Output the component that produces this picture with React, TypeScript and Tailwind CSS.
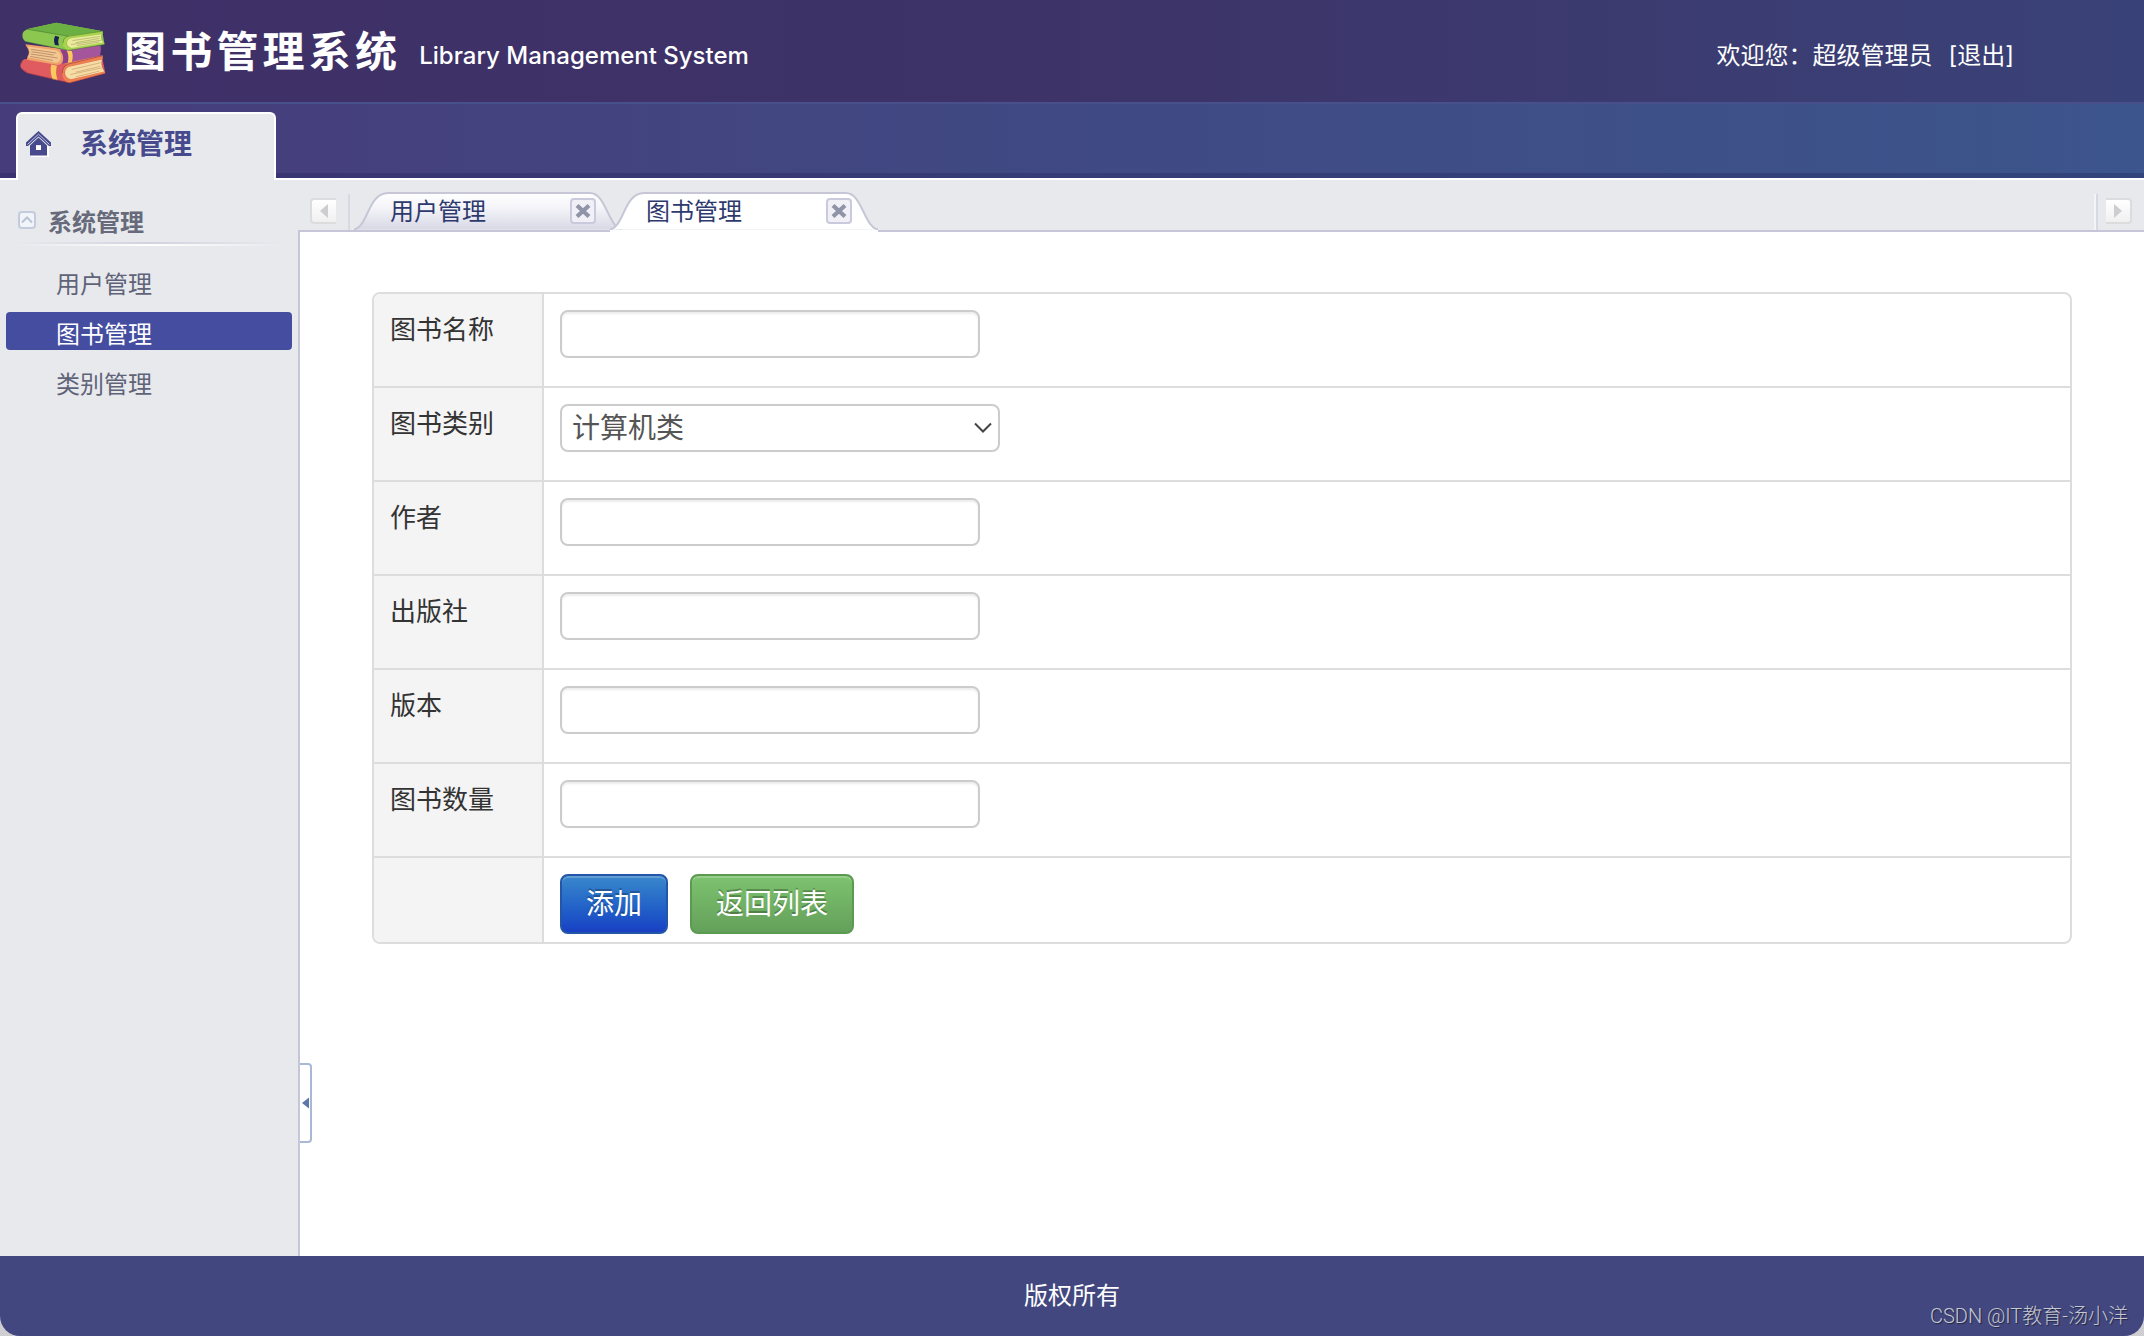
import React, { useState } from "react";

function BooksLogo() {
  return (
    <svg viewBox="60 70 256 184" className="mt-1 h-[62px] w-[86px] shrink-0" aria-hidden="true">
      {/* red book */}
      <path d="M74 180 L200 196 L306 170 L306 182 L314 222 L207 251 L82 222 Q60 212 61 198 Q63 184 74 180Z" fill="#df5b5f" />
      <path d="M172 190 L306 169 L306 180 L206 202 Q192 208 192 224 Q194 238 212 241 L313 217 L313 223 L207 251 Q186 246 186 222 Q186 204 200 198Z" fill="#ee8350" />
      <path d="M206 203 L304 181 Q298 198 311 217 L212 240 Q194 236 194 222 Q194 207 206 203Z" fill="#f5dda3" />
      <path d="M153 196 L170 200 Q164 220 172 243 L157 240 Q148 218 153 196Z" fill="#f8c95c" />
      <path d="M214 211 L300 191 M226 219 L298 202 M210 226 L304 206 M226 233 L296 216" stroke="#b98a5c" strokeWidth="1.5" fill="none" />
      <path d="M62 196 L68 182 M64 208 L84 222 L207 251 L313 223 M306 170 L200 196 Q186 204 186 222" stroke="#8c2a3c" strokeWidth="1.5" fill="none" />
      {/* purple book */}
      <path d="M176 150 L300 140 Q303 154 298 170 L198 192 L168 196Z" fill="#a4559c" />
      <path d="M76 136 L172 148 Q190 154 190 174 Q190 196 172 198 L80 182 L82 174 Q92 158 80 144Z" fill="#f0a06a" />
      <path d="M83 143 L166 154 Q182 158 182 174 Q182 190 166 191 L84 175 Q94 158 83 143Z" fill="#f2c890" />
      <path d="M92 151 L168 162 M94 158 L160 168 M92 165 L172 177 M90 172 L158 184" stroke="#8e5b50" strokeWidth="1.5" fill="none" />
      <path d="M190 152 L200 155 Q206 172 202 191 L186 194 Q194 174 180 154Z" fill="#8d3f87" />
      <path d="M199 154 L214 156 Q220 172 214 189 L202 191 Q208 172 199 154Z" fill="#f8c95c" />
      {/* green book */}
      <path d="M92 88 L168 72 L306 97 L306 104 L311 134 L200 154 L76 128 Q64 116 68 103 Q72 92 92 88Z" fill="#8cc850" />
      <path d="M80 91 L168 72 L306 97 L204 112Z" fill="#6cb043" />
      <path d="M204 111 L306 97 L306 105 L212 118 Q198 122 198 134 Q198 146 212 147 L311 131 L311 137 L204 154 Q188 148 188 133 Q190 115 204 111Z" fill="#a9d44d" />
      <path d="M212 118 L303 106 Q296 118 308 131 L214 147 Q200 144 200 133 Q200 121 212 118Z" fill="#ece99a" />
      <path d="M216 125 L298 113 M226 131 L296 119 M212 137 L302 124 M230 140 L296 129" stroke="#8a9350" strokeWidth="1.5" fill="none" />
      <path d="M165 111 L177 114 Q171 126 176 140 L164 138 Q158 124 165 111Z" fill="#172250" />
      <path d="M80 91 L204 112 L306 97 M76 128 L204 154 L311 137 M204 112 Q188 116 188 133" stroke="#3f7030" strokeWidth="1.5" fill="none" />
    </svg>
  );
}

function HomeIcon() {
  return (
    <svg viewBox="0 0 26 26" className="h-[26px] w-[26px] shrink-0" aria-hidden="true">
      <path d="M5 15 H23 V26 H5Z" fill="#fff" />
      <path d="M12.5 0 L0 11.5 V15 L2 15 L12.5 5.5 L23 15 L25 15 V11.5Z" fill="#474a8c" />
      <path d="M12.5 3.2 L1.5 13.5 M12.5 3.2 L23.5 13.5" stroke="#c3c5dc" strokeWidth="1" />
      <path fillRule="evenodd" d="M12.5 6.5 L4 14.5 V24.5 H21 V14.5Z M10 14 H15 V19 H10Z" fill="#474a8c" />
    </svg>
  );
}

function TabShape({ active }: { active: boolean }) {
  return (
    <svg viewBox="0 0 268 38" preserveAspectRatio="none" className="absolute inset-0 h-[38px] w-full" aria-hidden="true">
      <defs>
        <linearGradient id="tab-idle" x1="0" y1="0" x2="0" y2="1">
          <stop offset="0" stopColor="#ffffff" />
          <stop offset="0.35" stopColor="#f6f6fa" />
          <stop offset="1" stopColor="#d9d9e6" />
        </linearGradient>
      </defs>
      <path
        d="M0 37.5 C14 35 14 1 34 1 H236 C252 1 254 35 268 37.5"
        fill={active ? "#ffffff" : "url(#tab-idle)"}
        stroke="#c6c6d6"
        strokeWidth="2"
      />
    </svg>
  );
}

function DocTab({ label, active, onSelect }: { label: string; active: boolean; onSelect: () => void }) {
  return (
    <div
      className={
        active
          ? "relative z-10 -mr-3 h-[38px] w-[268px] shadow-[0_2px_0_#ffffff]"
          : "relative -mr-3 h-[38px] w-[268px]"
      }
    >
      <TabShape active={active} />
      <div className="relative flex h-full items-center justify-between pr-[26px] pl-9">
        <button
          type="button"
          role="tab"
          aria-selected={active}
          onClick={onSelect}
          className="pt-[2px] text-2xl text-[#2e3a6e]"
        >
          {label}
        </button>
        <button
          type="button"
          aria-label={"关闭" + label}
          className="flex h-[26px] w-[26px] items-center justify-center rounded-sm border-2 border-[#c9cadb] bg-[#f0f0f6]"
        >
          <svg viewBox="0 0 16 16" className="h-4 w-4" aria-hidden="true">
            <path d="M2 2.5 L14 13.5 M14 2.5 L2 13.5" stroke="#9094a8" strokeWidth="4.2" />
          </svg>
        </button>
      </div>
    </div>
  );
}

function Arrow({ dir }: { dir: "left" | "right" }) {
  return (
    <button
      type="button"
      aria-label={dir === "left" ? "向左滚动" : "向右滚动"}
      className={
        dir === "left"
          ? "flex h-[26px] w-[26px] items-center justify-center rounded-l-sm border-2 border-r-0 border-[#dcdcdf] bg-linear-to-b from-white to-[#f0f0f0]"
          : "flex h-[26px] w-[26px] items-center justify-center rounded-r-sm border-2 border-l-0 border-[#dcdcdf] bg-linear-to-b from-white to-[#f0f0f0]"
      }
    >
      <svg viewBox="0 0 10 16" className="h-4 w-[10px]" aria-hidden="true">
        <path d={dir === "left" ? "M9 1 V15 L1 8Z" : "M1 1 V15 L9 8Z"} fill="#cdcdcf" />
      </svg>
    </button>
  );
}

const labelCell =
  "w-[170px] border-r-2 border-[#dddddd] bg-[#f4f4f4] px-4 pt-4 text-left align-top text-[26px] leading-10 font-normal text-[#333333]";

function Row({ label, id, children }: { label: string; id: string; children: React.ReactNode }) {
  return (
    <tr className="h-[94px]">
      <th scope="row" className={labelCell + " border-b-2"}>
        <label htmlFor={id}>{label}</label>
      </th>
      <td className="border-b-2 border-[#dddddd] px-4 pt-4 align-top">{children}</td>
    </tr>
  );
}

function TextRow({ label, id }: { label: string; id: string }) {
  return (
    <Row label={label} id={id}>
      <input
        id={id}
        type="text"
        className="block h-12 w-[420px] rounded-lg border-2 border-[#cccccc] bg-white px-3 text-[28px] text-[#555555] shadow-[inset_0_2px_2px_rgba(0,0,0,0.075)]"
      />
    </Row>
  );
}

const menu = ["用户管理", "图书管理", "类别管理"];

export default function App() {
  const [current, setCurrent] = useState("图书管理");
  return (
    <div
      lang="zh-CN"
      className="flex min-h-screen flex-col bg-[#cfcfd3] font-['Inter','Noto_Sans_CJK_SC',sans-serif]"
    >
      <header className="flex h-[102px] items-center bg-linear-to-r from-[#3f3068] via-[#3d3368] to-[#394278] pr-[130px] pl-5 text-white">
        <BooksLogo />
        <h1 className="ml-[18px] pb-1 font-['Noto_Sans_CJK_SC',sans-serif] text-[42px] leading-[96px] font-bold tracking-widest">
          图书管理系统
        </h1>
        <span className="ml-[18px] pt-[10px] text-2xl font-medium">Library Management System</span>
        <div className="ml-auto flex gap-4 pt-[10px] text-2xl">
          <span>欢迎您：超级管理员</span>
          <a href="#logout">[退出]</a>
        </div>
      </header>

      <nav className="flex h-[76px] items-end border-t-2 border-[#47508a] bg-linear-to-r from-[#473c7b] via-[#404882] via-45% to-[#3c558c] pl-4 shadow-[inset_0_-5px_0_rgba(30,30,90,0.3)]">
        <a
          href="#system"
          className="z-10 -mb-[2px] flex h-[68px] w-[260px] items-center gap-7 rounded-t-md border-2 border-b-0 border-white bg-[#e8e9ed] pb-[6px] pl-2 text-[28px] font-bold text-[#474a8c]"
        >
          <HomeIcon />
          <span>系统管理</span>
        </a>
      </nav>

      <div className="flex grow border-t-2 border-white bg-[#e8e9ed]">
        <aside className="w-[298px] shrink-0">
          <h2 className="mt-6 flex h-9 items-center gap-3 pl-[18px] text-2xl font-bold text-[#666a7a]">
            <button
              type="button"
              aria-label="折叠"
              className="mb-1 h-[18px] w-[18px] rounded-sm border-2 border-[#c3cbdc] bg-[#f1f5fa]"
            >
              <svg viewBox="0 0 14 14" className="h-[14px] w-[14px]" aria-hidden="true">
                <path d="M2 9.5 L7 4.5 L12 9.5" stroke="#b9c3d6" strokeWidth="2" fill="none" />
              </svg>
            </button>
            <span className="pt-[2px]">系统管理</span>
          </h2>
          <div className="mx-4 mt-[2px] h-[2px] bg-linear-to-r from-transparent via-[#d3d3df] to-transparent" />
          <div className="mx-4 h-[2px] bg-linear-to-r from-transparent via-white to-transparent" />
          <ul className="mt-4 space-y-3 px-[6px]">
            {menu.map((m) => (
              <li key={m}>
                <a
                  href="#menu"
                  onClick={() => setCurrent(m)}
                  className={
                    m === current
                      ? "flex h-[38px] items-center rounded-sm bg-[#444da0] pt-2 pl-[50px] text-2xl text-white"
                      : "flex h-[38px] items-center rounded-sm pt-2 pl-[50px] text-2xl text-[#5f6378]"
                  }
                >
                  {m}
                </a>
              </li>
            ))}
          </ul>
        </aside>

        <div className="flex grow flex-col">
          <div className="flex h-[50px] items-end">
            <div className="flex h-[38px] items-center pl-3">
              <Arrow dir="left" />
            </div>
            <div className="mr-1 ml-3 h-9 border-r-2 border-[#d8d8e2] bg-white" />
            <div role="tablist" className="flex">
              <DocTab label="用户管理" active={current === "用户管理"} onSelect={() => setCurrent("用户管理")} />
              <DocTab label="图书管理" active={current !== "用户管理"} onSelect={() => setCurrent("图书管理")} />
            </div>
            <div className="ml-auto h-9 w-1 border-r-2 border-l-2 border-r-[#d8d8e2] border-l-[#f4f4f7]" />
            <div className="flex h-[38px] items-center pr-3 pl-2">
              <Arrow dir="right" />
            </div>
          </div>
          <main className="relative grow border-t-2 border-l-2 border-[#c6c6d8] bg-white px-[72px] pt-[60px] pb-[60px]">
            <div className="overflow-hidden rounded-lg border-2 border-[#dddddd]">
              <table className="w-full border-separate border-spacing-0">
                <tbody>
                  <TextRow label="图书名称" id="name" />
                  <Row label="图书类别" id="category">
                    <div className="relative w-[440px]">
                      <select
                        id="category"
                        className="block h-12 w-full appearance-none rounded-lg border-2 border-[#cccccc] bg-white pl-[10px] text-[28px] leading-10 text-[#555555]"
                      >
                        <option>计算机类</option>
                      </select>
                      <svg
                        viewBox="0 0 18 12"
                        className="pointer-events-none absolute top-[18px] right-2 h-3 w-[18px]"
                        aria-hidden="true"
                      >
                        <path d="M1 1.5 L9 9.5 L17 1.5" stroke="#444444" strokeWidth="2" fill="none" />
                      </svg>
                    </div>
                  </Row>
                  <TextRow label="作者" id="author" />
                  <TextRow label="出版社" id="publisher" />
                  <TextRow label="版本" id="edition" />
                  <TextRow label="图书数量" id="quantity" />
                  <tr>
                    <th className={labelCell} />
                    <td className="px-4 pt-4 pb-2">
                      <div className="flex gap-[22px]">
                        <button
                          type="button"
                          className="h-[60px] rounded-lg border-2 border-[#2355a8] bg-linear-to-b from-[#3a87cb] to-[#1a3fc4] px-6 text-[28px] text-white shadow-[inset_0_2px_0_rgba(255,255,255,0.2)] text-shadow-[0_-2px_0_rgba(0,0,0,0.25)]"
                        >
                          添加
                        </button>
                        <button
                          type="button"
                          className="h-[60px] rounded-lg border-2 border-[#5c9a52] bg-linear-to-b from-[#7dc36f] to-[#64a05a] px-6 text-[28px] text-white shadow-[inset_0_2px_0_rgba(255,255,255,0.2)] text-shadow-[0_-2px_0_rgba(0,0,0,0.25)]"
                        >
                          返回列表
                        </button>
                      </div>
                    </td>
                  </tr>
                </tbody>
              </table>
            </div>
            <button
              type="button"
              aria-label="收起侧栏"
              className="absolute bottom-[113px] left-0 flex h-20 w-3 items-center justify-center rounded-r-sm border-2 border-l-0 border-[#aab8d8] bg-white"
            >
              <svg viewBox="0 0 8 12" className="h-3 w-2" aria-hidden="true">
                <path d="M8 0.5 V11.5 L1 6Z" fill="#5f76a8" />
              </svg>
            </button>
          </main>
        </div>
      </div>

      <footer className="relative flex h-20 items-center justify-center rounded-b-[20px] bg-[#42487f] text-2xl text-white">
        <span>版权所有</span>
        <span className="absolute right-4 bottom-[6px] font-['Roboto','Noto_Sans_CJK_SC',sans-serif] text-xl font-light text-[#c5c7d3] text-shadow-[1px_1px_1px_rgba(0,0,0,0.5)]">
          CSDN @IT教育-汤小洋
        </span>
      </footer>
    </div>
  );
}
